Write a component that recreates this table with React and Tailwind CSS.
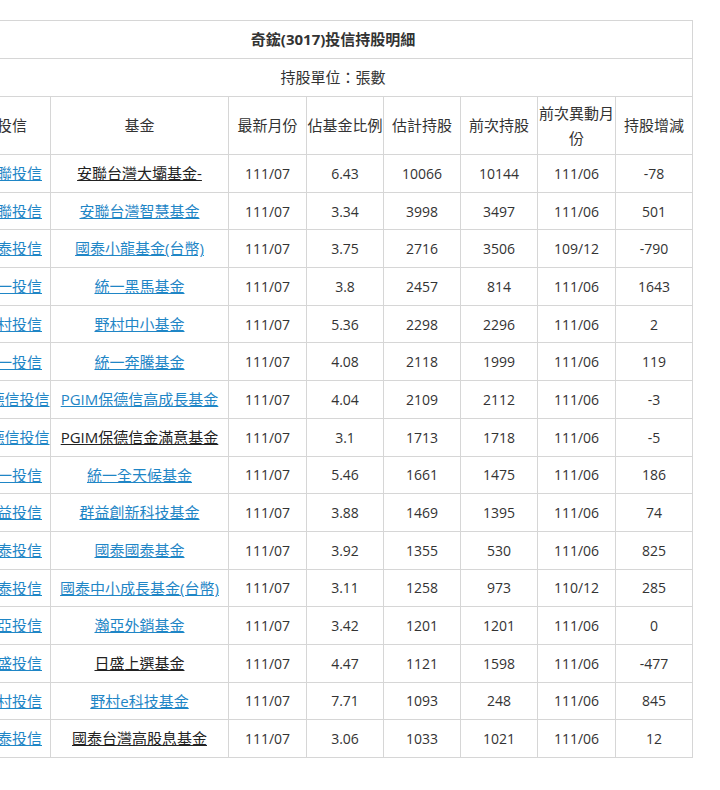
import React from 'react';

const rows = [
  ['安聯投信', '安聯台灣大壩基金-', false, '111/07', '6.43', '10066', '10144', '111/06', '-78'],
  ['安聯投信', '安聯台灣智慧基金', true, '111/07', '3.34', '3998', '3497', '111/06', '501'],
  ['國泰投信', '國泰小龍基金(台幣)', true, '111/07', '3.75', '2716', '3506', '109/12', '-790'],
  ['統一投信', '統一黑馬基金', true, '111/07', '3.8', '2457', '814', '111/06', '1643'],
  ['野村投信', '野村中小基金', true, '111/07', '5.36', '2298', '2296', '111/06', '2'],
  ['統一投信', '統一奔騰基金', true, '111/07', '4.08', '2118', '1999', '111/06', '119'],
  ['保德信投信', 'PGIM保德信高成長基金', true, '111/07', '4.04', '2109', '2112', '111/06', '-3'],
  ['保德信投信', 'PGIM保德信金滿意基金', false, '111/07', '3.1', '1713', '1718', '111/06', '-5'],
  ['統一投信', '統一全天候基金', true, '111/07', '5.46', '1661', '1475', '111/06', '186'],
  ['群益投信', '群益創新科技基金', true, '111/07', '3.88', '1469', '1395', '111/06', '74'],
  ['國泰投信', '國泰國泰基金', true, '111/07', '3.92', '1355', '530', '111/06', '825'],
  ['國泰投信', '國泰中小成長基金(台幣)', true, '111/07', '3.11', '1258', '973', '110/12', '285'],
  ['瀚亞投信', '瀚亞外銷基金', true, '111/07', '3.42', '1201', '1201', '111/06', '0'],
  ['日盛投信', '日盛上選基金', false, '111/07', '4.47', '1121', '1598', '111/06', '-477'],
  ['野村投信', '野村e科技基金', true, '111/07', '7.71', '1093', '248', '111/06', '845'],
  ['國泰投信', '國泰台灣高股息基金', false, '111/07', '3.06', '1033', '1021', '111/06', '12'],
];

const headers = ['投信', '基金', '最新月份', '佔基金比例', '估計持股', '前次持股', '前次異動月份', '持股增減'];
const widths = ['w-[77px]', 'w-[178px]', 'w-[78px]', 'w-[77px]', 'w-[77px]', 'w-[77px]', 'w-[78px]', 'w-[77px]'];

const cell = 'border border-[#d6d6d6] text-center align-middle';

export default function App() {
  return (
    <div
      className="w-[720px] h-[790px] overflow-hidden bg-white pt-5 text-[14px] text-[#333]"
      style={{ fontFamily: '"Open Sans", "Noto Sans CJK TC", sans-serif' }}
    >
      <table className="ml-[-27px] w-[719px] table-fixed border-collapse">
        <colgroup>
          {widths.map((w, i) => (
            <col key={i} className={w} />
          ))}
        </colgroup>
        <tbody>
          <tr className="h-[38px]">
            <td colSpan={8} className={`${cell} text-[15px] font-bold`}>奇鋐(3017)投信持股明細</td>
          </tr>
          <tr className="h-[38px]">
            <td colSpan={8} className={`${cell} text-[15px]`}>持股單位：張數</td>
          </tr>
          <tr className="h-[58px]">
            {headers.map((h) => (
              <td
                key={h}
                className={`${cell} px-0 text-[15px] leading-[25px] ${h === '佔基金比例' ? 'whitespace-nowrap' : ''}`}
              >
                {h}
              </td>
            ))}
          </tr>
          {rows.map((r, i) => (
            <tr key={i} className="h-[37.7px]">
              <td className={`${cell} whitespace-nowrap text-[15px]`}>
                <a href="#" className="text-[#1f86c6] underline">{r[0]}</a>
              </td>
              <td className={`${cell} whitespace-nowrap text-[15px]`}>
                <a href="#" className={`underline ${r[2] ? 'text-[#1f86c6]' : 'text-[#222]'}`}>{r[1]}</a>
              </td>
              {r.slice(3).map((v, j) => (
                <td key={j} className={`${cell} px-1`}>{v}</td>
              ))}
            </tr>
          ))}
        </tbody>
      </table>
    </div>
  );
}
